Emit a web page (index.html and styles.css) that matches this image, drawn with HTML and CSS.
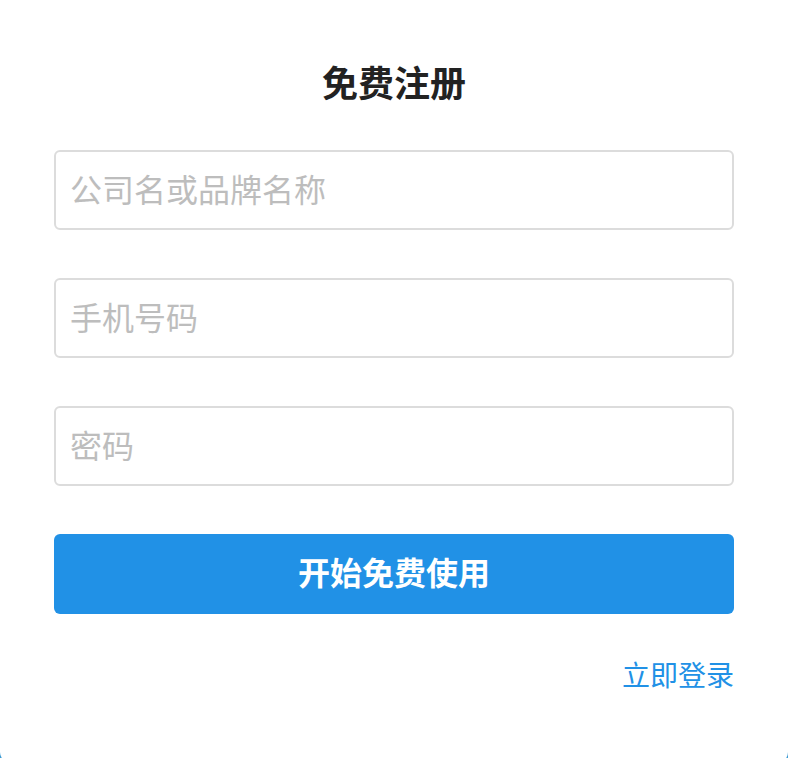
FILE: index.html
```html
<!DOCTYPE html>
<html lang="zh-CN">
<head>
<meta charset="utf-8">
<title>免费注册</title>
<link rel="stylesheet" href="styles.css">
</head>
<body>
<div class="card">
  <h1 class="title">免费注册</h1>
  <form class="form">
    <input class="field" type="text" placeholder="公司名或品牌名称">
    <input class="field" type="text" placeholder="手机号码">
    <input class="field" type="password" placeholder="密码">
    <button class="submit" type="button">开始免费使用</button>
  </form>
  <div class="footer"><a class="login" href="#">立即登录</a></div>
</div>
</body>
</html>
```
FILE: styles.css
```css
html, body {
  margin: 0;
  padding: 0;
}
body {
  background: #3d9bd3;
  width: 788px;
  height: 758px;
  overflow: hidden;
  font-family: "Noto Sans CJK SC", "Noto Sans", sans-serif;
}
.card {
  box-sizing: border-box;
  width: 788px;
  height: 763px;
  background: #fff;
  border-radius: 0 0 11px 11px;
  padding: 56px 54px 0;
}
.title {
  margin: 0;
  text-align: center;
  font-size: 36px;
  line-height: 50px;
  font-weight: 700;
  color: #222;
}
.form {
  margin-top: 44px;
  display: flex;
  flex-direction: column;
  gap: 48px;
}
.field {
  box-sizing: border-box;
  width: 100%;
  height: 80px;
  border: 2px solid #dcdcdc;
  border-radius: 6px;
  padding: 0 14px 5px;
  font-family: inherit;
  font-size: 32px;
  color: #333;
  outline: none;
  background: #fff;
}
.field::placeholder {
  color: #bdbdbd;
}
.submit {
  height: 80px;
  border: none;
  border-radius: 6px;
  padding: 0 0 7px;
  background: #2191e6;
  color: #fff;
  font-family: inherit;
  font-size: 32px;
  font-weight: 700;
}
.footer {
  margin-top: 40px;
  display: flex;
  justify-content: flex-end;
}
.login {
  font-size: 28px;
  line-height: 40px;
  color: #2191e6;
  text-decoration: none;
}
```
